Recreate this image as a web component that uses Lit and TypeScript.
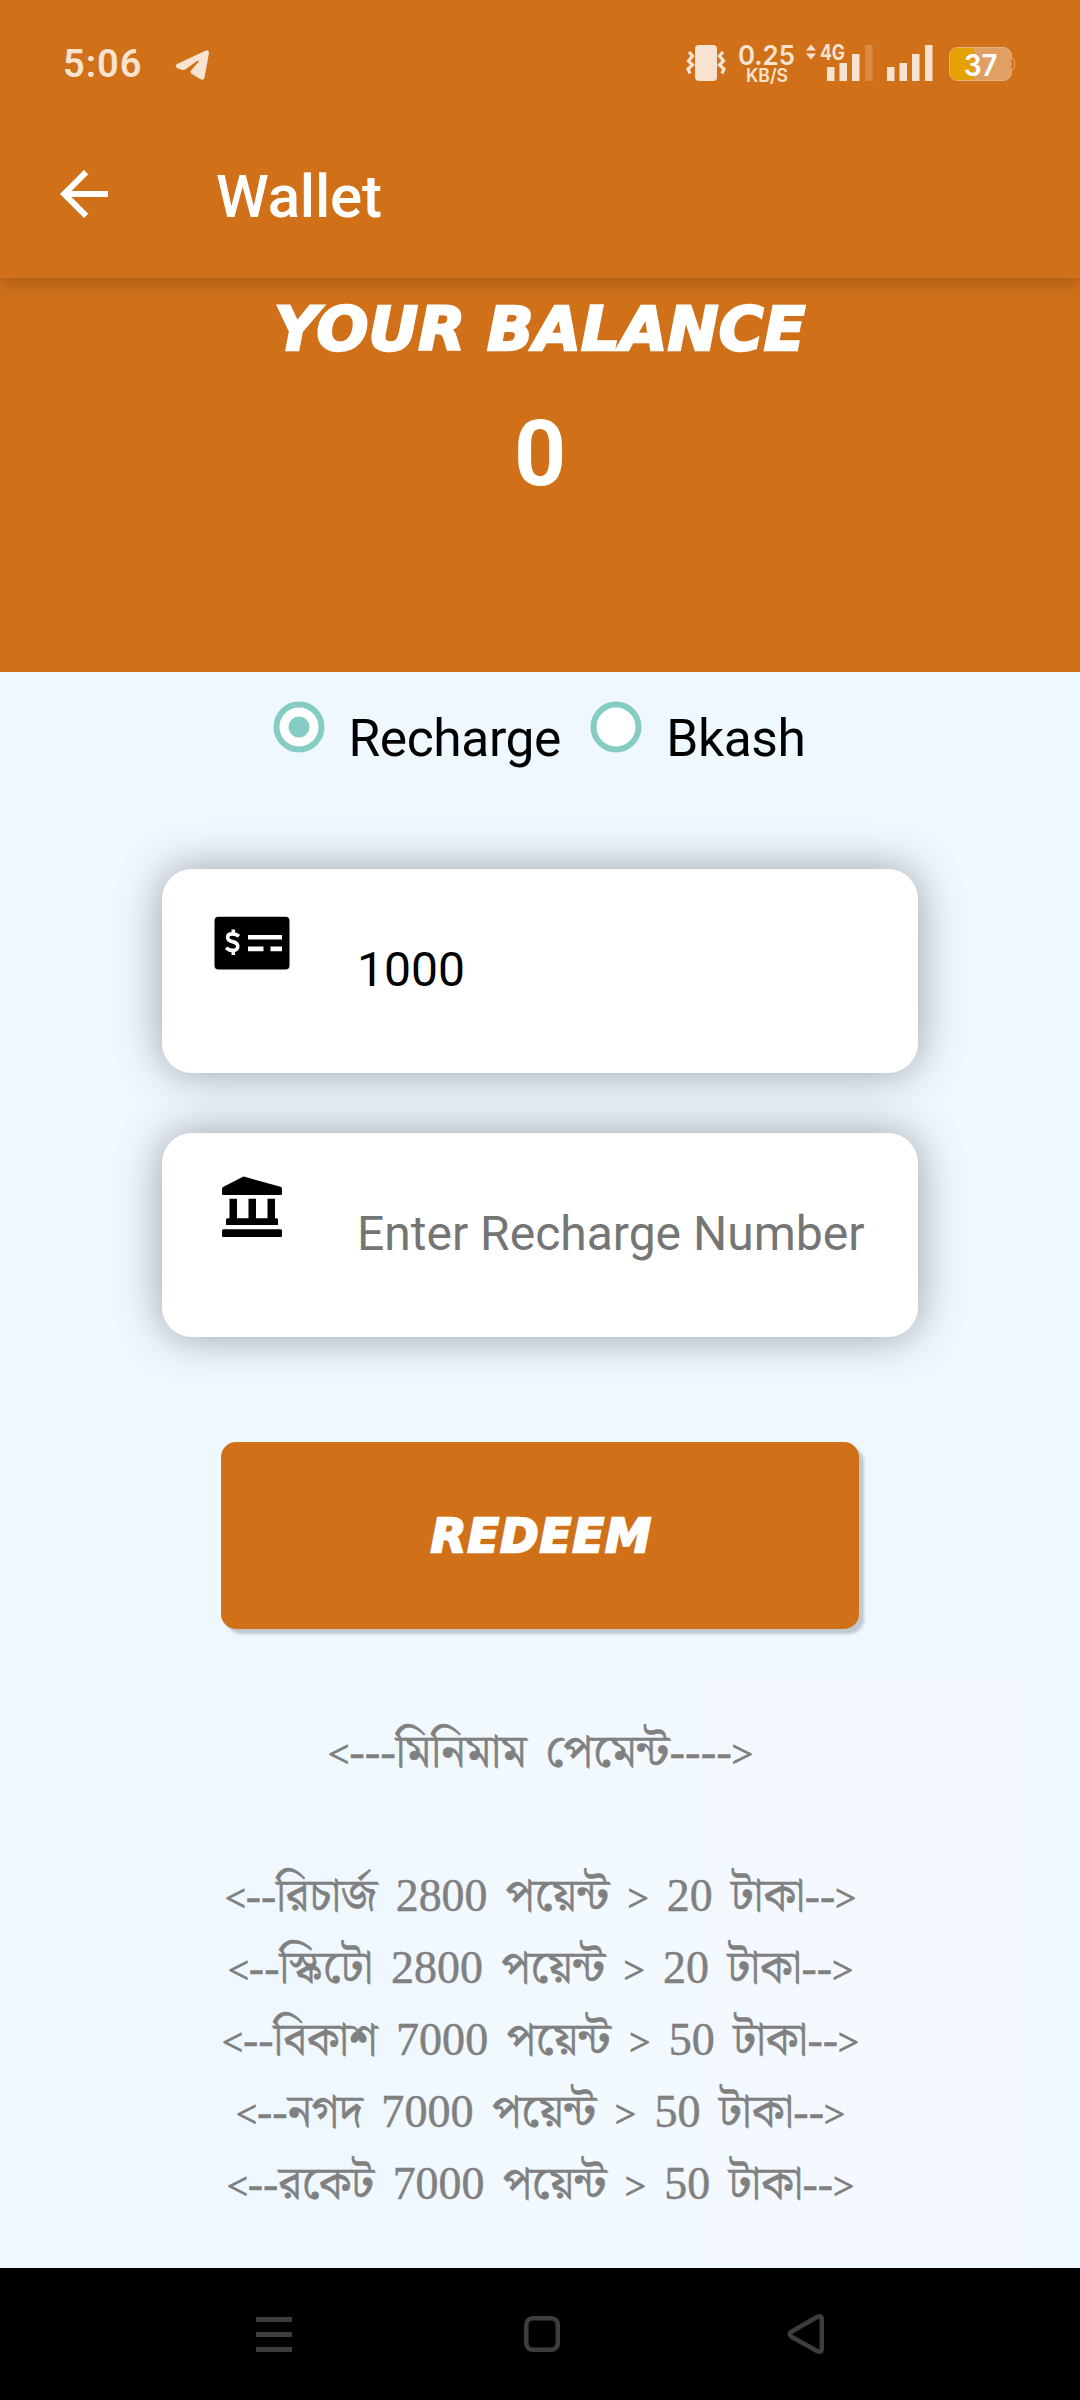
import { LitElement, html, css, svg } from "lit";
import { customElement, property } from "lit/decorators.js";

@customElement("status-bar")
class StatusBar extends LitElement {
  static styles = css`
    :host { display: flex; height: 116px; color: #f7e3d0; font-family: Inter, Roboto, sans-serif; padding: 0 64px 0 63px; box-sizing: border-box; justify-content: space-between; }
    .left, .right { display: flex; align-items: flex-start; }
    .time { font: 600 38px/44px Roboto, sans-serif; letter-spacing: 1px; margin-top: 42px; width: 112px; white-space: nowrap; }
    svg { display: block; flex: none; overflow: visible; }
    .plane { margin-top: 49px; }
    .vib { margin-top: 44px; width: 40px; height: 38px; }
    .rate { margin: 44px 0 0 12px; }
    .sig { margin: 44px 0 0 9px; }
    .bat { margin: 44px 0 0 15px; }
    text { font-family: Inter, Roboto, sans-serif; font-weight: 700; }
    .num, .unit { font-weight: 600; }
  `;
  render() {
    return html`
      <div class="left">
        <div class="time">5:06</div>
        <svg class="plane" width="36" height="32" viewBox="175 49 36 32" fill="currentColor">
          <path d="M177 64 Q174.500 66 177 68 L182.500 70 Q184 70.200 186 69 L197 61 Q199.500 60 198.500 62 L191 70.500 Q189.500 72 191.500 73.800 L200 79 Q203.500 81 204.500 77.500 L209 53 Q209 49.500 206 50.500 Z"/>
        </svg>
      </div>
      <div class="right">
        <svg class="vib" viewBox="686 44 40 38" fill="none" stroke="currentColor" stroke-width="3.200">
          <rect x="695" y="45" width="22" height="36" rx="4" fill="currentColor" stroke="none"/>
          <path d="M689 52l3.500 4-4 5 4 4-4.500 4 2 4.500M723 52l-3.500 4 4 5-4 4 4.500 4-2 4.500"/>
        </svg>
        <svg class="rate" width="57" height="40" viewBox="738 44 57 40" fill="currentColor">
          <text class="num" x="738" y="65" font-size="27.500" textLength="57" lengthAdjust="spacingAndGlyphs">0.25</text>
          <text class="unit" x="746" y="81.500" font-size="18" textLength="42" lengthAdjust="spacingAndGlyphs">KB/S</text>
        </svg>
        <svg class="sig" width="129" height="38" viewBox="804 44 129 38" fill="currentColor">
          <path d="M806 50.500l5-6 5 6zM806 53.500l5 6 5-6z"/>
          <text x="820" y="60" font-size="21" textLength="25" lengthAdjust="spacingAndGlyphs">4G</text>
          <path d="M827 67h7.500v14h-7.500zM839.500 63h7.500v18h-7.500zM852 54h7.500v27h-7.500zM887 67h7.500v14h-7.500zM899.500 63h7.500v18h-7.500zM912 54h7.500v27h-7.500zM925 45h7.500v36h-7.500z"/>
          <path opacity=".22" d="M865 45h7.500v36h-7.500z"/>
        </svg>
        <svg class="bat" width="68" height="38" viewBox="948 44 68 38">
          <rect x="949.500" y="47.500" width="62" height="33" rx="8" fill="#e09f63"/>
          <path d="M974 47.500h-16.500a8 8 0 0 0-8 8v17a8 8 0 0 0 8 8h16.500z" fill="#e4a200"/>
          <path d="M957.500 47.500h46a8 8 0 0 1 8 8v3q3 0 3 3v5q0 3-3 3v3a8 8 0 0 1-8 8h-46a8 8 0 0 1-8-8v-17a8 8 0 0 1 8-8z" fill="none" stroke="#e9b27c"/>
          <text class="num" x="964" y="75.500" font-size="30" fill="#fff" textLength="33.500" lengthAdjust="spacingAndGlyphs">37</text>
        </svg>
      </div>`;
  }
}

@customElement("radio-option")
class RadioOption extends LitElement {
  @property() label = "";
  @property({ type: Boolean }) checked = false;
  static styles = css`
    :host { display: flex; align-items: flex-start; }
    svg { display: block; margin-right: 24px; }
    .label { font: 400 51.500px/60px Roboto, sans-serif; letter-spacing: -0.400px; color: #000; margin-top: 8px; white-space: nowrap; }
  `;
  render() {
    return html`
      <svg width="52" height="52" viewBox="0 0 52 52">
        <circle cx="26" cy="26" r="22.500" fill="#fff" stroke="#85ccc3" stroke-width="6"/>
        ${this.checked ? svg`<circle cx="26" cy="26" r="10.500" fill="#85ccc3"/>` : ""}
      </svg>
      <span class="label">${this.label}</span>`;
  }
}

const RATES = [
  { text: "<---মিনিমাম পেমেন্ট---->", width: 425 },
  { text: "", width: 0 },
  { text: "<--রিচার্জ 2800 পয়েন্ট > 20 টাকা-->", width: 631 },
  { text: "<--স্কিটো 2800 পয়েন্ট > 20 টাকা-->", width: 625 },
  { text: "<--বিকাশ 7000 পয়েন্ট > 50 টাকা-->", width: 637 },
  { text: "<--নগদ 7000 পয়েন্ট > 50 টাকা-->", width: 609 },
  { text: "<--রকেট 7000 পয়েন্ট > 50 টাকা-->", width: 627 },
];

/** Splits a line so that the angle brackets can be set in a smaller size. */
const runs = (text: string) =>
  text.split(/([<>])/).filter((t) => t).map((t) => svg`<tspan class=${/[<>]/.test(t) ? "angle" : "word"}>${t}</tspan>`);

@customElement("app-root")
class AppRoot extends LitElement {
  static styles = css`
    :host { display: flex; flex-direction: column; width: 1080px; height: 2400px; background: #eff7ff; overflow: hidden; font-family: Roboto, sans-serif; }
    svg { display: block; flex: none; }
    .top { height: 278px; flex: none; background: #d0711a; box-shadow: 0 5px 16px rgba(0,0,0,.2); position: relative; }
    .bar { display: flex; padding: 42px 0 0 48px; }
    .title { font: 500 60px/70px Roboto, sans-serif; letter-spacing: -0.200px; color: #fff; margin: 4px 0 0 96px; }
    .balance { height: 394px; flex: none; background: #d0711a; color: #fff; text-align: center; }
    .heading { font: italic 700 61px/70px "DejaVu Sans", sans-serif; -webkit-text-stroke: 2.500px #fff; letter-spacing: 0.200px; padding-top: 16px; white-space: nowrap; }
    .amount { font: 700 91px/100px Roboto, sans-serif; margin-top: 40px; }
    .main { flex: 1; min-height: 0; display: flex; flex-direction: column; align-items: center; }
    .radios { display: flex; flex: none; width: 533px; justify-content: space-between; margin: 29px 2px 0 0; height: 168px; }
    .field { width: 756px; height: 204px; flex: none; box-sizing: border-box; border-radius: 30px; background: #fff; box-shadow: 0 0 44px rgba(0,0,0,.36); display: flex; margin-bottom: 60px; padding-left: 52px; }
    .field svg { margin-top: 43px; }
    .value { font-size: 48px; line-height: 60px; margin: 71px 0 0 67px; color: #000; white-space: nowrap; }
    .hint { color: #757575; }
    .redeem { width: 638px; height: 187px; flex: none; border: 0; border-radius: 15px; background: #d0711a; box-shadow: 5px 5px 3px #c0c8d0; color: #fff; font: italic 700 46px/60px "DejaVu Sans", sans-serif; -webkit-text-stroke: 2.500px #fff; letter-spacing: 1.300px; margin: 45px 0 0 0; padding: 0 0 0 3px; }
    .rates { align-self: stretch; flex: 1; min-height: 0; box-sizing: border-box; margin: 45px 45px 0 225px; padding: 43px 180px 0 0; border-radius: 0 10px 0 0; background: linear-gradient(90deg, #eff7ff, #f2f9ff 45%, #f4f8ff 82%); display: flex; flex-direction: column; align-items: center; }
    .row { height: 72px; overflow: visible; }
    .row text { font-family: "Liberation Serif", "Noto Serif Bengali", serif; font-size: 46px; fill: #808080; word-spacing: 7px; stroke: #808080; stroke-width: 0.500px; }
    .angle { font-size: 37px; stroke-width: 1px; }
    .nav { height: 132px; flex: none; background: #000; display: flex; align-items: center; justify-content: space-between; padding: 0 254px; box-sizing: border-box; }
  `;
  render() {
    return html`
      <div class="top">
        <status-bar></status-bar>
        <div class="bar">
          <svg width="72" height="72" viewBox="0 0 24 24" fill="#fff"><path d="M20 11H7.830l5.590-5.590L12 4l-8 8 8 8 1.410-1.410L7.830 13H20v-2z"/></svg>
          <div class="title">Wallet</div>
        </div>
      </div>
      <div class="balance">
        <div class="heading">YOUR BALANCE</div>
        <div class="amount">0</div>
      </div>
      <div class="main">
        <div class="radios">
          <radio-option label="Recharge" checked></radio-option>
          <radio-option label="Bkash"></radio-option>
        </div>
        <div class="field">
          <svg width="76" height="62" viewBox="214 910 76 60" preserveAspectRatio="none">
            <rect x="214.500" y="914.700" width="75" height="51" rx="4"/>
            <path d="M248 932.200h34v4.500h-34zM248 943.500h15.500v4.500h-15.500zM270.500 943.500h11.500v4.500h-11.500z" fill="#fff"/>
            <path d="M239 933.500q-3-2.300-6.500-2.300c-6.500 0-6.500 6 0 7.500 7 1.500 7 8.500 0 8.500q-3.500 0-6.500-2.500M233.300 927v5M233.300 946v5.500" fill="none" stroke="#fff" stroke-width="3.600"/>
          </svg>
          <div class="value">1000</div>
        </div>
        <div class="field">
          <svg width="76" height="62" viewBox="214 1166 76 60" preserveAspectRatio="none">
            <path d="M242.500 1167q1.500-.8 3 0L280.500 1176.500q1.500.5 1.500 2v4.500q0 1.500-1.500 1.500h-57q-1.500 0-1.500-1.500v-4.500q0-1.500 1.500-2zM229.500 1188h7.500v19h11.500v-19h7.500v19h11.500v-19h7.500v19h1.500q1.500 0 1.500 1.500v5h-52v-5q0-1.500 1.500-1.500h2z"/>
            <rect x="222" y="1217.500" width="60" height="7.500" rx="1.500"/>
          </svg>
          <div class="value hint">Enter Recharge Number</div>
        </div>
        <button class="redeem">REDEEM</button>
        <div class="rates">
          ${RATES.map((r) => html`<svg class="row" width=${r.width} height="72">${r.text ? svg`<text x="0" y="50" textLength=${r.width} lengthAdjust="spacingAndGlyphs">${runs(r.text)}</text>` : ""}</svg>`)}
        </div>
      </div>
      <div class="nav">
        <svg width="40" height="44" viewBox="254 2312 40 44" fill="#3d3d3d"><path d="M256 2317h36v5h-36zM256 2332h36v5h-36zM256 2347h36v5h-36z"/></svg>
        <svg width="40" height="44" viewBox="520 2312 40 44" fill="none" stroke="#3d3d3d" stroke-width="4.500"><rect x="526.300" y="2318.300" width="31.500" height="31.500" rx="6.500"/></svg>
        <svg width="40" height="44" viewBox="786 2312 40 44" fill="none" stroke="#3d3d3d" stroke-width="4.500" stroke-linejoin="round"><path d="M791 2332 L817.500 2316.800 Q821.800 2315 821.800 2319 V2349 Q821.800 2353 817.500 2351.200 L791 2336.500 Q788.500 2334 791 2332Z"/></svg>
      </div>`;
  }
}
